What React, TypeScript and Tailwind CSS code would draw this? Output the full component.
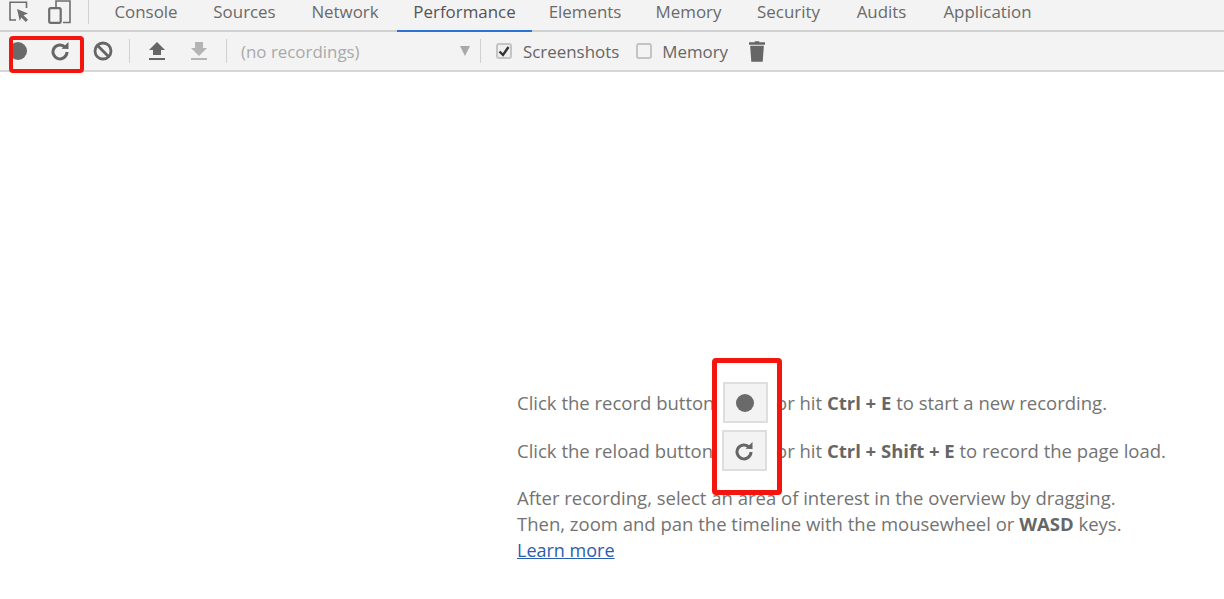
const tabs = [
  { name: 'Console', width: 'w-[100px]' },
  { name: 'Sources', width: 'w-[97px]' },
  { name: 'Network', width: 'w-[104px]' },
  { name: 'Performance', width: 'w-[135px]' },
  { name: 'Elements', width: 'w-[106px]' },
  { name: 'Memory', width: 'w-[101px]' },
  { name: 'Security', width: 'w-[99px]' },
  { name: 'Audits', width: 'w-[87px]' },
  { name: 'Application', width: 'w-[125px]' },
];

const ReloadIcon = ({ className }: { className: string }) => (
  <svg viewBox="0 0 20 20" className={className} fill="none">
    <path d="M15.2 6.2A7 7 0 1 0 17 11" stroke="currentColor" strokeWidth="3" />
    <path d="M11.5 7.8 18.5 8V1z" fill="currentColor" />
  </svg>
);

const Divider = ({ className }: { className: string }) => <div className={`w-px h-[24px] bg-[#d0d0d0] ${className}`} />;

function TabBar() {
  return (
    <div className="flex h-[32px] bg-[#f3f3f3] border-b-2 border-[#d0d0d0]">
      <div className="flex items-start w-[96px] shrink-0 pl-[9px]">
        <svg viewBox="0 0 20 22" className="w-[20px] h-[22px] mt-[1px] text-[#6e6e6e]" fill="none">
          <path d="M7 19H1V1.2h16.5V7" stroke="currentColor" strokeWidth="1.6" />
          <path d="M8 8l11 4.5-4.5 1.7 4.5 4.5-2.2 2.2-4.5-4.5L10.8 20z" fill="currentColor" />
        </svg>
        <svg viewBox="0 0 23 24" className="w-[23px] h-[24px] ml-[19px] text-[#6e6e6e]" fill="none">
          <path d="M8 7V1h14v21.5H15" stroke="currentColor" strokeWidth="1.6" />
          <rect x="1.2" y="8.2" width="11.5" height="14.6" rx="1.5" stroke="currentColor" strokeWidth="2.2" />
        </svg>
        <Divider className="ml-[17px]" />
      </div>
      <div className="flex text-[16.9px]">
        {tabs.map((tab) => (
          <div
            key={tab.name}
            className={`${tab.width} text-center h-[32px] leading-[24px] ${tab.name === 'Performance' ? 'border-b-2 border-[#2a74d6] text-[#555]' : 'text-[#6a6a6a]'}`}
          >
            {tab.name}
          </div>
        ))}
      </div>
    </div>
  );
}

function Toolbar() {
  return (
    <div className="flex items-center h-[40px] bg-[#f3f3f3] border-b-2 border-[#d6d6d6] text-[#666] text-[16.9px]">
      <div className="w-[18px] h-[18px] rounded-full bg-[#6a6a6a] ml-[9px]" />
      <ReloadIcon className="w-[20px] h-[20px] ml-[23px] text-[#666]" />
      <svg viewBox="0 0 20 20" className="w-[20px] h-[20px] ml-[23px] text-[#666]" fill="none">
        <circle cx="10" cy="10" r="8" stroke="currentColor" strokeWidth="2.8" />
        <path d="M4.5 4.5l11 11" stroke="currentColor" strokeWidth="2.8" />
      </svg>
      <Divider className="ml-[16px]" />
      <svg viewBox="0 0 16 18" className="w-[16px] h-[18px] ml-[19px] text-[#666]">
        <path d="M8 0l8 8h-4v5H4V8H0zM0 16h16v2H0z" fill="currentColor" />
      </svg>
      <svg viewBox="0 0 16 18" className="w-[16px] h-[18px] ml-[26px] text-[#b4b4b4]">
        <path d="M4 0h8v6h4l-8 8-8-8h4zM0 16h16v2H0z" fill="currentColor" />
      </svg>
      <Divider className="ml-[19px] w-[2px]" />
      <div className="flex items-center justify-between w-[234px] ml-[12px] pl-[2px] pr-[3px] text-[#a9a9a9]">
        <span className="pt-[1px]">(no recordings)</span>
        <span className="w-0 h-0 border-x-[5px] border-x-transparent border-t-[10px] border-t-[#a9a9a9]" />
      </div>
      <Divider className="ml-[7px]" />
      <div className="flex items-center justify-center w-[16px] h-[16px] ml-[15px] rounded-[3px] border-2 border-[#c4c4c4] bg-[#efefef]">
        <svg viewBox="0 0 12 12" className="w-[12px] h-[12px] shrink-0">
          <path d="M1.5 6.5L5 10l5.5-8" fill="none" stroke="#333" strokeWidth="2.4" />
        </svg>
      </div>
      <span className="ml-[11px] pt-[1px]">Screenshots</span>
      <div className="w-[16px] h-[16px] ml-[17px] rounded-[3px] border-2 border-[#c4c4c4] bg-[#f3f3f3]" />
      <span className="ml-[10px] pt-[1px]">Memory</span>
      <svg viewBox="0 0 14 18" className="w-[16px] h-[21px] ml-[21px] text-[#666]">
        <path d="M5 0h4v1h5v2H0V1h5zM1 4h12l-1 14H2z" fill="currentColor" />
      </svg>
    </div>
  );
}

function Hint() {
  return (
    <div className="pl-[517px] pt-[310px] text-[#737373] text-[18.5px]">
      <div className="flex items-center h-[41px]">
        <span className="w-[206px] shrink-0 overflow-hidden whitespace-nowrap">Click the record button</span>
        <div className="flex items-center justify-center w-[45px] h-[41px] bg-[#f3f3f3] border-2 border-[#dedede]">
          <div className="w-[18px] h-[18px] rounded-full bg-[#6a6a6a] mr-[1px]" />
        </div>
        <span className="ml-[8px] whitespace-nowrap">
          or hit <b className="text-[#666]">Ctrl + E</b> to start a new recording.
        </span>
      </div>
      <div className="flex items-center h-[41px] mt-[7px]">
        <span className="w-[205px] shrink-0 overflow-hidden whitespace-nowrap">Click the reload button</span>
        <div className="flex items-center justify-center w-[45px] h-[41px] bg-[#f3f3f3] border-2 border-[#dedede]">
          <ReloadIcon className="w-[20px] h-[20px] text-[#666] mr-[1px]" />
        </div>
        <span className="ml-[9px] whitespace-nowrap">
          or hit <b className="text-[#666]">Ctrl + Shift + E</b> to record the page load.
        </span>
      </div>
      <div className="mt-[14px] leading-[26px] whitespace-nowrap">
        <div>After recording, select an area of interest in the overview by dragging.</div>
        <div>
          Then, zoom and pan the timeline with the mousewheel or <b className="text-[#666]">WASD</b> keys.
        </div>
        <a className="text-[#2a5db0] underline text-[18px]">Learn more</a>
      </div>
    </div>
  );
}

export default function App() {
  return (
    <div className="relative w-[1224px] h-[599px] overflow-hidden bg-white font-['Open_Sans','Noto_Sans',sans-serif]">
      <TabBar />
      <Toolbar />
      <Hint />
      {/* red annotation boxes drawn on top of the screenshot */}
      <div className="absolute left-[9px] top-[36px] w-[75px] h-[37px] border-[4px] border-[#f5150f] rounded-[4px]" />
      <div className="absolute left-[712px] top-[358px] w-[70px] h-[137px] border-[5px] border-[#f5150f] rounded-[4px]" />
    </div>
  );
}
